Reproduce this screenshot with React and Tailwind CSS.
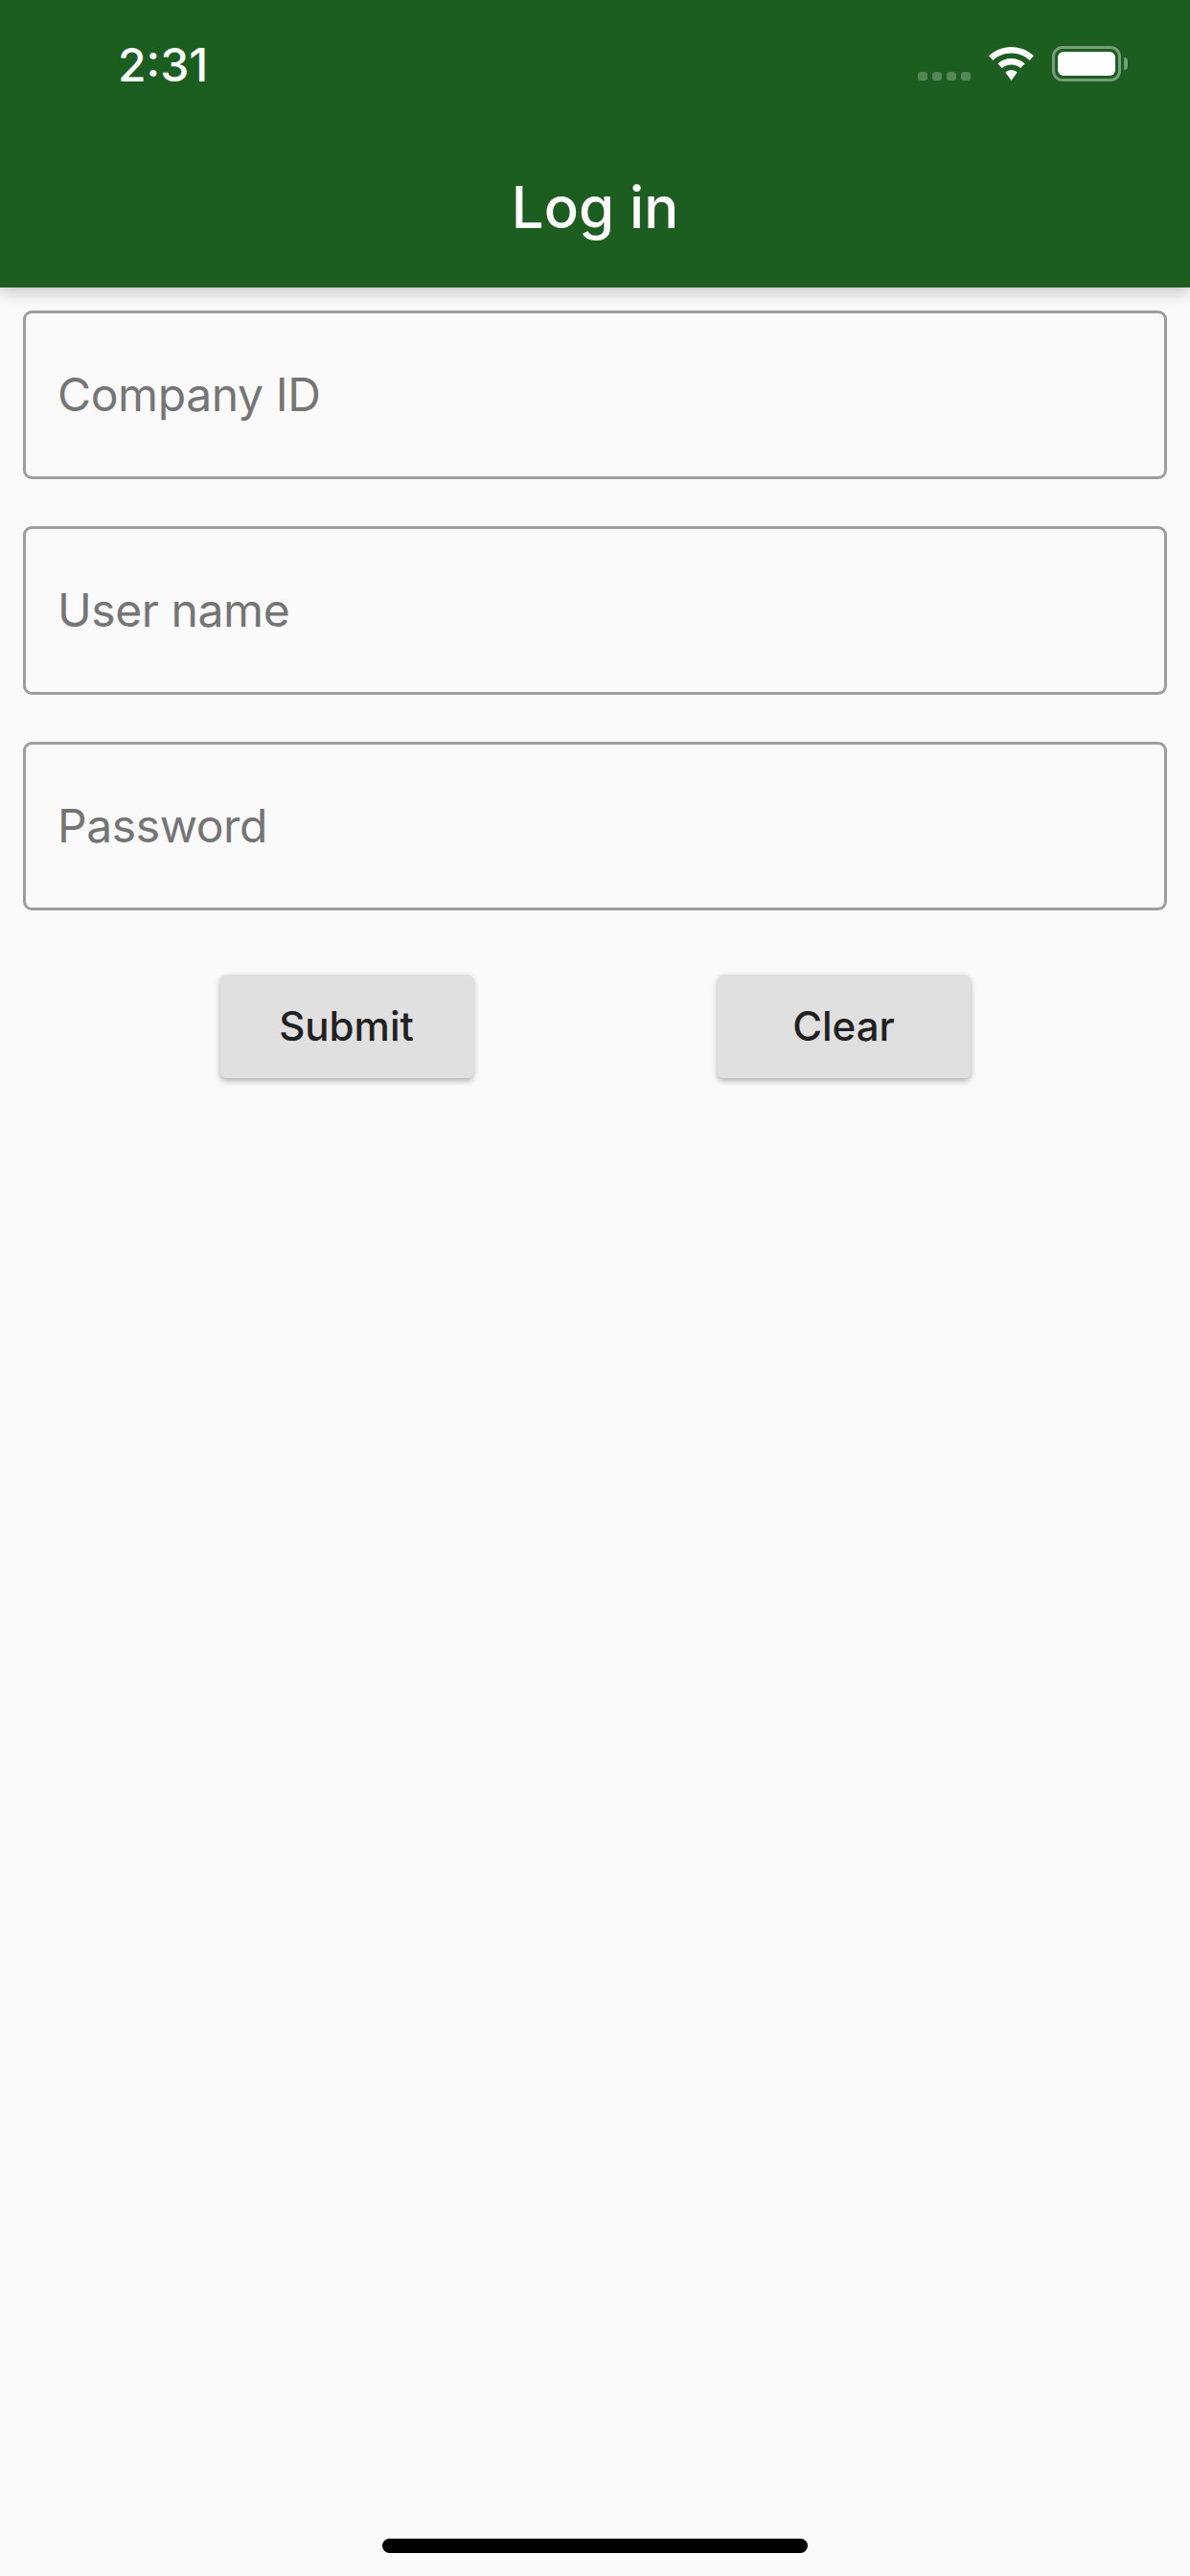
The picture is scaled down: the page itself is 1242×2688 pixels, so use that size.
const fields = ['Company ID', 'User name', 'Password'];

function StatusIcons() {
  return (
    <div className="flex items-start">
      <div className="flex gap-[5px] mt-[27px]">
        {[0, 1, 2, 3].map((i) => (
          <div key={i} className="w-[10px] h-[9px] rounded-[3px] bg-white/25" />
        ))}
      </div>
      <svg className="ml-[19px] mt-[1px]" width="47" height="35" viewBox="0 0 47 35" fill="#fff">
        <path d="M23.5 0C32.6 0 40.8 3.5 47 9.3L42.6 14C37.6 9.3 30.9 6.6 23.5 6.6C16.1 6.6 9.4 9.3 4.4 14L0 9.3C6.2 3.5 14.4 0 23.5 0Z" />
        <path d="M23.5 12C28.9 12 33.8 14 37.6 17.4L33.2 22C30.6 19.7 27.2 18.4 23.5 18.4C19.8 18.4 16.4 19.7 13.8 22L9.4 17.4C13.2 14 18.1 12 23.5 12Z" />
        <path d="M23.5 24C25.9 24 28.1 24.9 29.7 26.4L23.5 35L17.3 26.4C18.9 24.9 21.1 24 23.5 24Z" />
      </svg>
      <div className="ml-[19px] w-[72px] h-[37px] rounded-[11px] border-[3px] border-white/40 p-[3px]">
        <div className="w-full h-full rounded-[6px] bg-white" />
      </div>
      <div className="ml-[3px] mt-[12px] w-[4px] h-[13px] rounded-r-full bg-white/40" />
    </div>
  );
}

export default function App() {
  return (
    <div className="min-h-[2688px] bg-[#fafafa] flex flex-col font-['Inter',sans-serif]">
      <header className="h-[300px] bg-[#1b5e20] shadow-[0_6px_15px_rgba(0,0,0,0.2)] flex flex-col">
        <div className="flex justify-between pl-[123px] pr-[65px] pt-[48px]">
          <span className="text-[48px] leading-[40px] font-medium text-white">2:31</span>
          <StatusIcons />
        </div>
        <h1 className="mt-[93px] text-center text-[60px] leading-[70px] font-medium text-white">Log in</h1>
      </header>

      <main className="flex-1 flex flex-col px-[24px] pt-[24px]">
        <div className="flex flex-col gap-[49px]">
          {fields.map((name) => (
            <input
              key={name}
              placeholder={name}
              className="h-[176px] w-full rounded-[9px] border-[3px] border-[#9e9e9e] bg-transparent px-[33px] pb-[2px] text-[48px] tracking-[-0.4px] text-[#212121] placeholder:text-[#757575] outline-none"
            />
          ))}
        </div>
        <div className="mt-[67px] flex justify-center gap-[255px]">
          <button className="w-[264px] h-[108px] rounded-[6px] bg-[#e0e0e0] pb-[2px] text-[42px] font-medium text-[#212121] shadow-[0_3px_6px_rgba(0,0,0,0.3)]">Submit</button>
          <button className="w-[264px] h-[108px] rounded-[6px] bg-[#e0e0e0] pb-[2px] text-[42px] font-medium text-[#212121] shadow-[0_3px_6px_rgba(0,0,0,0.3)]">Clear</button>
        </div>
      </main>

      <div className="flex justify-center pb-[24px]">
        <div className="w-[444px] h-[15px] rounded-full bg-black" />
      </div>
    </div>
  );
}
